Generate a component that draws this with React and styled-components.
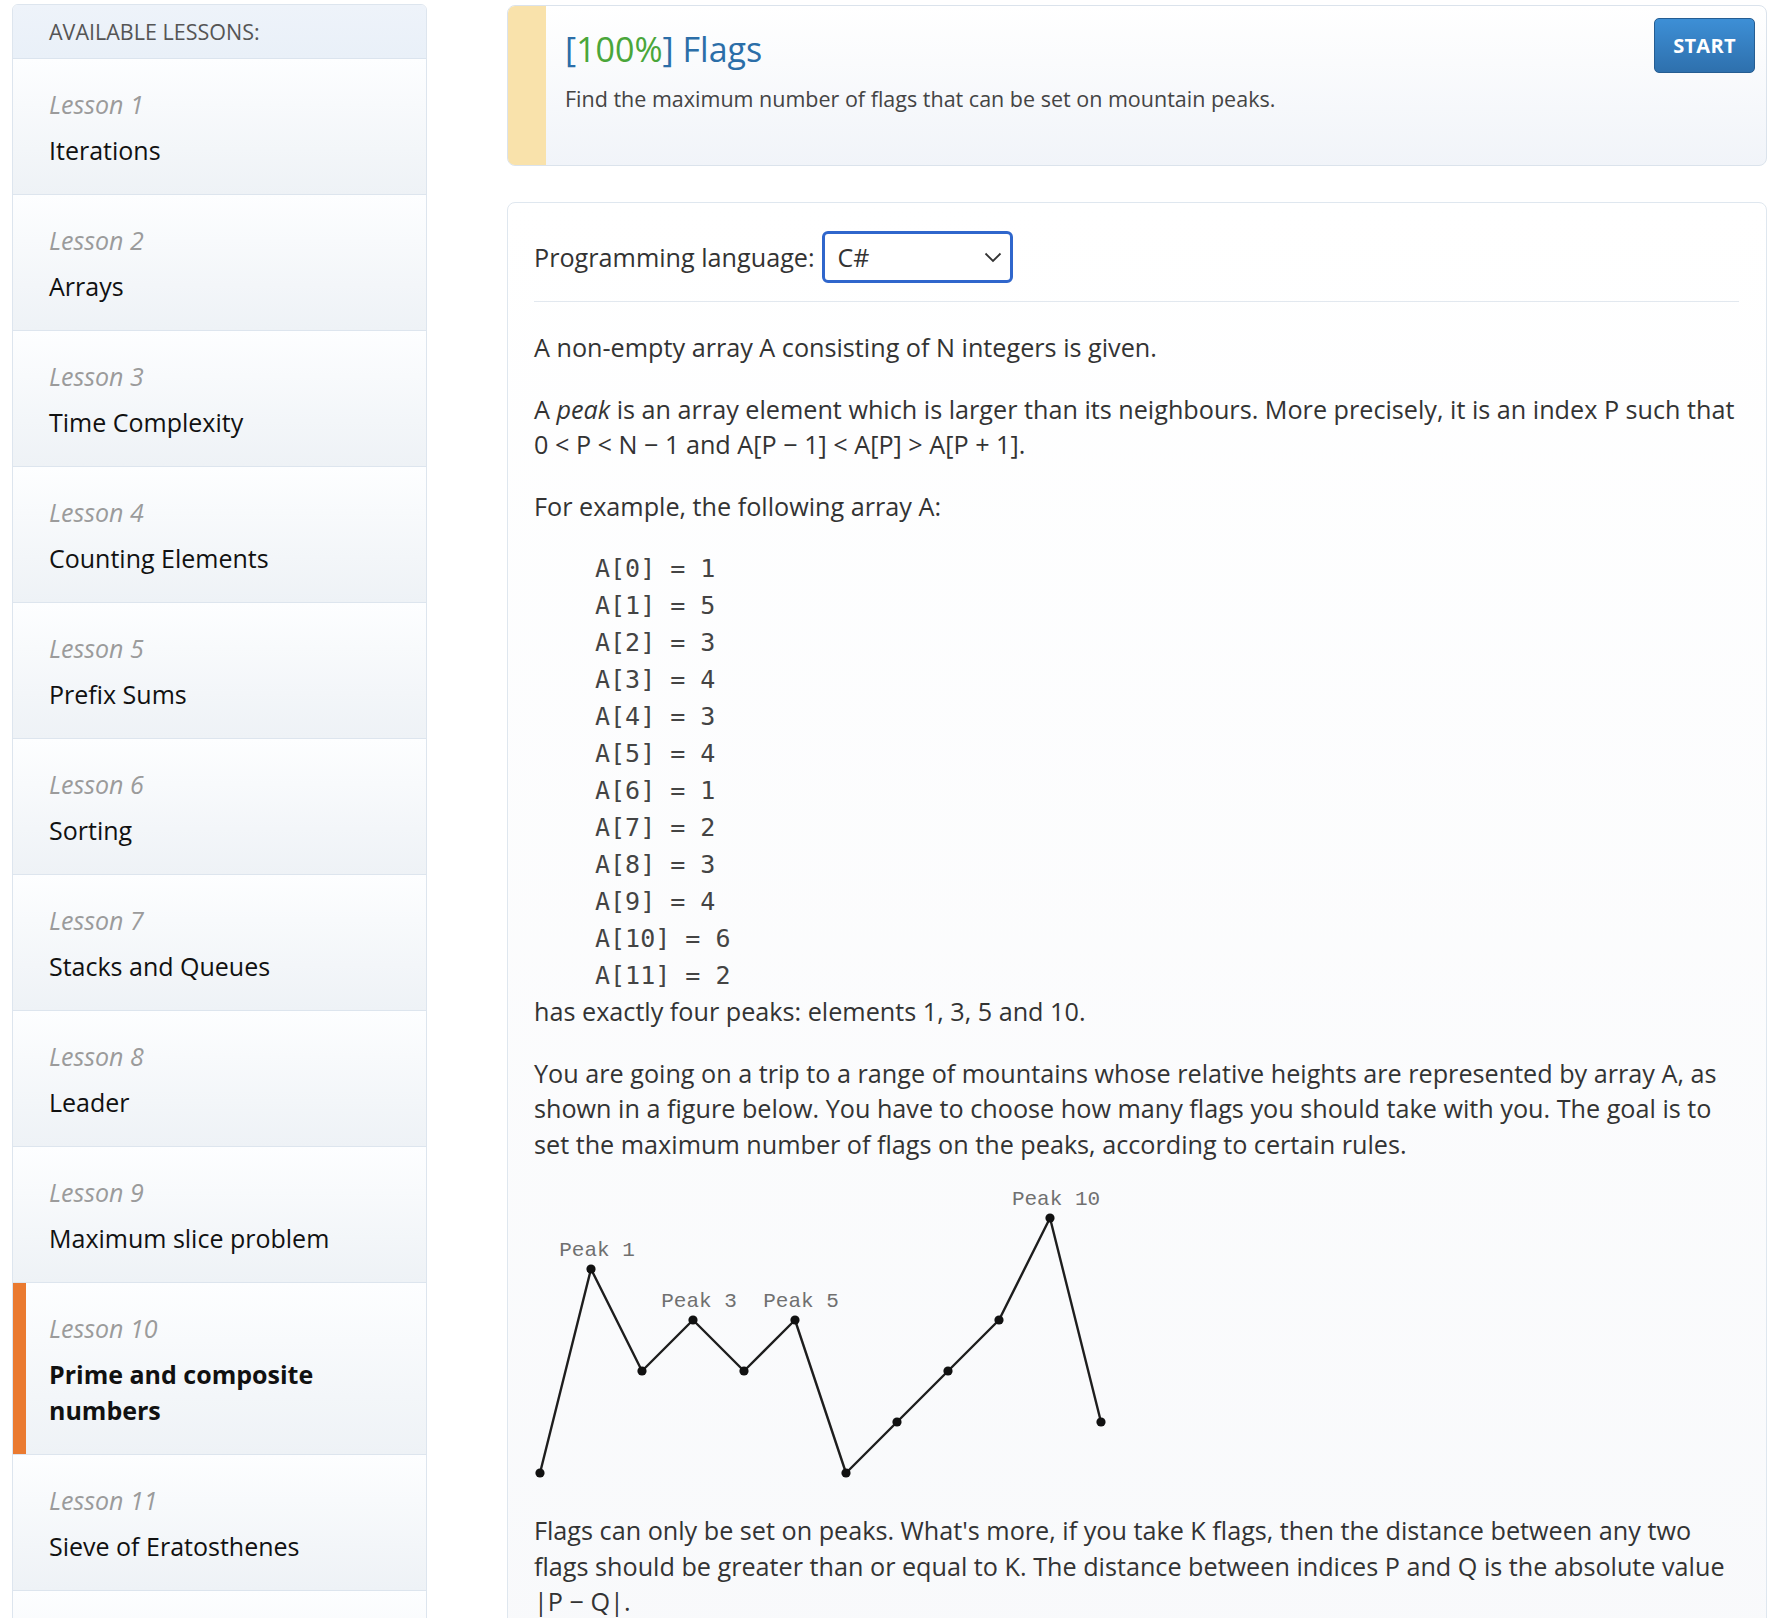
import React from 'react';
import styled, { createGlobalStyle } from 'styled-components';

const lessons = [
  { num: 1, title: 'Iterations' },
  { num: 2, title: 'Arrays' },
  { num: 3, title: 'Time Complexity' },
  { num: 4, title: 'Counting Elements' },
  { num: 5, title: 'Prefix Sums' },
  { num: 6, title: 'Sorting' },
  { num: 7, title: 'Stacks and Queues' },
  { num: 8, title: 'Leader' },
  { num: 9, title: 'Maximum slice problem' },
  { num: 10, title: 'Prime and composite numbers', active: true },
  { num: 11, title: 'Sieve of Eratosthenes' },
  { num: 12, title: 'Euclidean algorithm' },
];

const values = [1, 5, 3, 4, 3, 4, 1, 2, 3, 4, 6, 2];
const peaks = [1, 3, 5, 10];

const GlobalStyle = createGlobalStyle`
  html, body {
    margin: 0;
    background: #ffffff;
  }
  body {
    font-family: "Open Sans", "Noto Sans", sans-serif;
    color: #333;
  }
  * {
    box-sizing: border-box;
  }
`;

const MountainChart = () => {
  const px = (i) => 6 + i * 51;
  const py = (v) => 285 - (v - 1) * 51;
  const points = values.map((v, i) => `${px(i)},${py(v)}`).join(' ');
  return (
    <Chart viewBox="0 0 580 300" width="580" height="300">
      <polyline points={points} fill="none" stroke="#1e1e1e" strokeWidth="2.4" strokeLinejoin="round" />
      {values.map((v, i) => (
        <circle key={i} cx={px(i)} cy={py(v)} r="4.6" fill="#111" />
      ))}
      {peaks.map((i) => (
        <text key={i} x={px(i) + 6} y={py(values[i]) - 13} textAnchor="middle">
          Peak {i}
        </text>
      ))}
    </Chart>
  );
};

const App = () => {
  return (
    <>
      <GlobalStyle />
      <Page>
        <Sidebar>
          <SidebarHeader>Available lessons:</SidebarHeader>
          {lessons.map((l) => (
            <LessonItem key={l.num} $active={l.active}>
              <LessonLabel>Lesson {l.num}</LessonLabel>
              <LessonTitle $active={l.active}>{l.title}</LessonTitle>
            </LessonItem>
          ))}
        </Sidebar>

        <Main>
          <TaskHeader>
            <Accent />
            <TaskInfo>
              <TaskTitle>
                [<Score>100%</Score>] Flags
              </TaskTitle>
              <TaskDesc>Find the maximum number of flags that can be set on mountain peaks.</TaskDesc>
            </TaskInfo>
            <StartButton>START</StartButton>
          </TaskHeader>

          <ContentCard>
            <LangRow>
              <LangLabel>Programming language:</LangLabel>
              <LangSelect>
                <span>C#</span>
                <svg width="18" height="11" viewBox="0 0 18 11">
                  <path d="M1.5 1.5 L9 9 L16.5 1.5" fill="none" stroke="#333" strokeWidth="1.8" />
                </svg>
              </LangSelect>
            </LangRow>
            <Divider />

            <Para>A non-empty array A consisting of N integers is given.</Para>
            <Para>
              A <em>peak</em> is an array element which is larger than its neighbours. More precisely, it is an index P
              such that 0 &lt; P &lt; N − 1 and A[P − 1] &lt; A[P] &gt; A[P + 1].
            </Para>
            <Para>For example, the following array A:</Para>
            <Code>
              {values.map((v, i) => `A[${i}] = ${v}`).join('\n')}
            </Code>
            <Para>has exactly four peaks: elements 1, 3, 5 and 10.</Para>
            <Para>
              You are going on a trip to a range of mountains whose relative heights are represented by array A, as
              shown in a figure below. You have to choose how many flags you should take with you. The goal is to set
              the maximum number of flags on the peaks, according to certain rules.
            </Para>
            <MountainChart />
            <Para>
              Flags can only be set on peaks. What's more, if you take K flags, then the distance between any two flags
              should be greater than or equal to K. The distance between indices P and Q is the absolute value |P − Q|.
            </Para>
          </ContentCard>
        </Main>
      </Page>
    </>
  );
};

const Page = styled.div`
  display: flex;
  align-items: flex-start;
  gap: 80px;
  padding: 4px 15px 0 12px;
`;

const Sidebar = styled.aside`
  width: 415px;
  flex-shrink: 0;
  border: 1px solid #dde5ee;
  border-radius: 6px 6px 0 0;
  overflow: hidden;
`;

const SidebarHeader = styled.div`
  height: 54px;
  line-height: 53px;
  padding-left: 36px;
  font-size: 21.5px;
  text-transform: uppercase;
  color: #555;
  background: linear-gradient(#eef3fa, #e9f0f8);
  border-bottom: 1px solid #dbe4ee;
`;

const LessonItem = styled.div`
  padding: 27px 36px 26px 36px;
  border-bottom: 1px solid #dde5ee;
  background: linear-gradient(#fdfeff, #eef2f6);
  box-shadow: ${(p) => (p.$active ? 'inset 13px 0 0 #ea7a30' : 'none')};
`;

const LessonLabel = styled.div`
  font-size: 25px;
  line-height: 36px;
  font-style: italic;
  color: #9b9b9b;
`;

const LessonTitle = styled.div`
  margin-top: 10px;
  font-size: 25px;
  line-height: 36px;
  color: #111;
  font-weight: ${(p) => (p.$active ? 700 : 400)};
`;

const Main = styled.main`
  flex: 1;
  min-width: 0;
  padding-top: 1px;
`;

const TaskHeader = styled.div`
  display: flex;
  height: 161px;
  border: 1px solid #dbe3ec;
  border-radius: 8px;
  overflow: hidden;
  background: linear-gradient(#ffffff, #f1f4f9);
`;

const Accent = styled.div`
  width: 38px;
  flex-shrink: 0;
  background: #f9e2ab;
`;

const TaskInfo = styled.div`
  flex: 1;
  padding: 21px 0 0 19px;
`;

const TaskTitle = styled.h1`
  margin: 0;
  font-size: 34px;
  line-height: 44px;
  font-weight: 400;
  color: #2b6ea8;
`;

const Score = styled.span`
  color: #4aa63a;
`;

const TaskDesc = styled.p`
  margin: 12px 0 0;
  font-size: 21.5px;
  line-height: 32px;
  color: #444;
`;

const StartButton = styled.button`
  align-self: flex-start;
  margin: 12px 11px 0 0;
  width: 101px;
  height: 55px;
  border: 1px solid #255d92;
  border-radius: 5px;
  background: linear-gradient(#3d8fd6, #2e70ad);
  color: #fff;
  font-family: "Open Sans", sans-serif;
  font-size: 20px;
  font-weight: 700;
  letter-spacing: 0.3px;
  cursor: pointer;
`;

const ContentCard = styled.section`
  margin-top: 36px;
  padding: 28px 27px 40px 26px;
  border: 1px solid #dfe7ef;
  border-radius: 8px;
  background: linear-gradient(#ffffff, #f8f9fb);
`;

const LangRow = styled.div`
  display: flex;
  align-items: center;
  gap: 7px;
  height: 52px;
`;

const LangLabel = styled.span`
  font-size: 25.2px;
  color: #333;
`;

const LangSelect = styled.div`
  display: flex;
  align-items: center;
  justify-content: space-between;
  width: 191px;
  height: 52px;
  padding: 0 8px 0 13px;
  border: 3px solid #2f66cc;
  border-radius: 6px;
  background: #fff;
  font-size: 25px;
  color: #333;
`;

const Divider = styled.hr`
  margin: 18px 0 28px;
  border: 0;
  border-top: 1px solid #e2e8ef;
`;

const Para = styled.p`
  margin: 0 0 26px;
  font-size: 25.2px;
  line-height: 35.5px;
  color: #333;

  em {
    font-style: italic;
  }
`;

const Code = styled.pre`
  margin: 0;
  padding-left: 61px;
  font-family: "DejaVu Sans Mono", "Liberation Mono", monospace;
  font-size: 25px;
  line-height: 37px;
  color: #444;
`;

const Chart = styled.svg`
  display: block;
  margin-bottom: 25px;

  text {
    font-family: "Liberation Mono", "Courier New", monospace;
    font-size: 21px;
    fill: #707070;
  }
`;

export default App;
